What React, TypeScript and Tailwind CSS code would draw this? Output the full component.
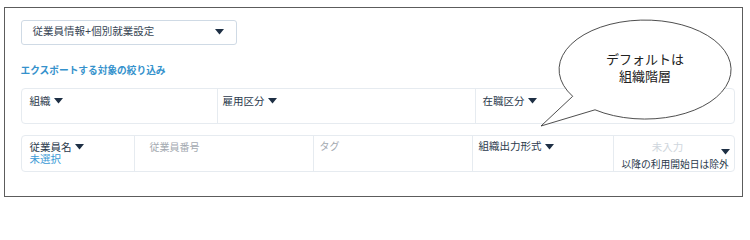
import React from "react";

const FONT = '"Liberation Sans", "Noto Sans CJK JP", "Noto Sans", sans-serif';

function Tri({ className = "" }: { className?: string }) {
  return (
    <svg width="9" height="6" viewBox="0 0 9 6" className={className}>
      <path d="M0 0 L9 0 L4.5 5.5 Z" fill="#1e2f44" />
    </svg>
  );
}

function Label({ text }: { text: string }) {
  return (
    <span className="inline-flex items-center text-[#2b3a4c]">
      {text}
      <Tri className="ml-[3px]" />
    </span>
  );
}

export default function App() {
  return (
    <div className="relative w-[750px] h-[204px] bg-white pl-[4px] pt-[7px]" style={{ fontFamily: FONT }}>
      <div className="w-[739px] h-[190px] border-[1.5px] border-[#5c5c5c] pl-[15.5px] pt-[11.5px]">
        {/* select */}
        <div className="w-[216px] h-[25px] border border-[#cfdae5] rounded-[3px] flex items-center justify-between pl-[11px] pr-[12px] text-[10.5px] text-[#3a4756]">
          <span>従業員情報+個別就業設定</span>
          <Tri />
        </div>

        <div className="mt-[19px] h-[14px] leading-[14px] text-[9.7px] font-bold text-[#3592cc]">
          エクスポートする対象の絞り込み
        </div>

        {/* row 1 */}
        <div className="mt-[10px] w-[714px] h-[36px] border border-[#e6ebf0] rounded-[4px] flex text-[10.5px] leading-[15px]">
          <div className="w-[195px] pl-[8px] pt-[5px]">
            <Label text="組織" />
          </div>
          <div className="w-[258px] border-l border-[#e6ebf0] pl-[5px] pt-[5px]">
            <Label text="雇用区分" />
          </div>
          <div className="flex-1 border-l border-[#e6ebf0] pl-[7px] pt-[5px]">
            <Label text="在職区分" />
          </div>
        </div>

        {/* row 2 */}
        <div className="mt-[11px] w-[714px] h-[37px] border border-[#e6ebf0] rounded-[4px] flex text-[10.5px]">
          <div className="w-[112px] pl-[8px] pt-[5px] leading-[12px]">
            <div className="h-[12px]">
              <Label text="従業員名" />
            </div>
            <div className="text-[#3a9ad6]">未選択</div>
          </div>
          <div className="w-[179px] border-l border-[#e6ebf0] pl-[15px] pt-[4.5px] leading-[15px] text-[10px] text-[#a3a9b0]">
            従業員番号
          </div>
          <div className="w-[159px] border-l border-[#e6ebf0] pl-[6px] pt-[3.5px] leading-[15px] text-[10px] text-[#a3a9b0]">
            タグ
          </div>
          <div className="w-[141px] border-l border-[#e6ebf0] pl-[6px] pt-[3.5px] leading-[15px]">
            <Label text="組織出力形式" />
          </div>
          <div className="relative flex-1 border-l border-[#e6ebf0] pt-[4px] leading-[15px]">
            <div className="text-center pr-[12px] text-[10.5px] text-[#cfd6dd]">未入力</div>
            <Tri className="absolute right-[4px] top-[13px]" />
            <div className="pl-[8px] mt-[4px] text-[9.75px] leading-[12px] text-[#2b3a4c] whitespace-nowrap">
              以降の利用開始日は除外
            </div>
          </div>
        </div>
      </div>

      {/* speech bubble callout */}
      <div className="absolute left-[530px] top-[15px] w-[220px] h-[120px]">
        <svg width="220" height="120" viewBox="0 0 220 120" className="absolute left-0 top-0">
          <path
            d="M42.7 81.3 A86 49.5 0 1 1 65 94.8 L11 111 Z"
            fill="white"
            stroke="#3a3a3a"
            strokeWidth="0.9"
          />
        </svg>
        <div className="absolute left-[29px] w-[172px] top-[36px] text-center text-[13px] leading-[17px] text-[#222]">
          <div>デフォルトは</div>
          <div>組織階層</div>
        </div>
      </div>
    </div>
  );
}
